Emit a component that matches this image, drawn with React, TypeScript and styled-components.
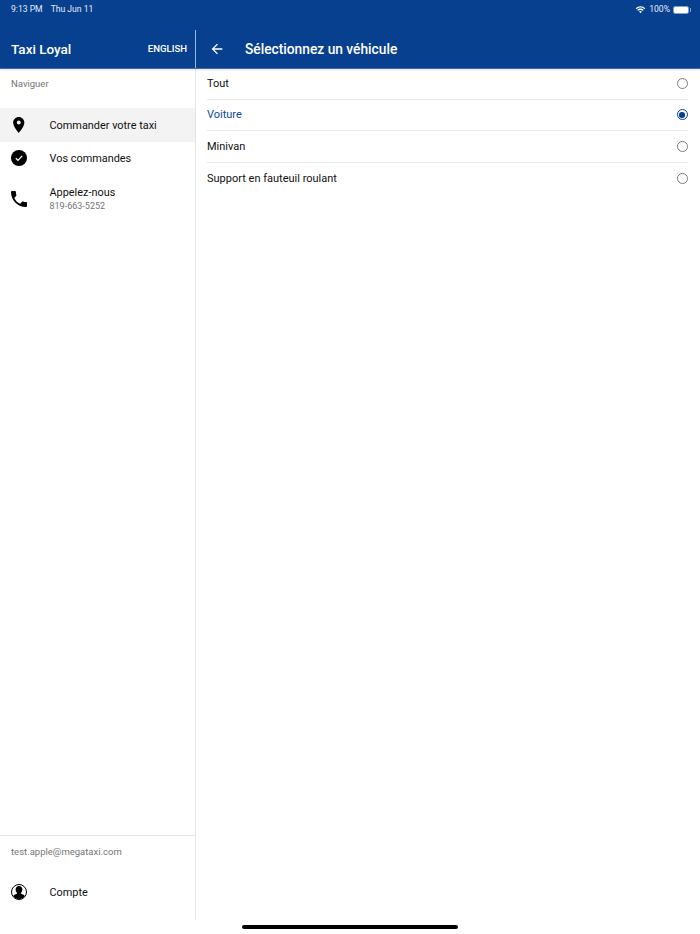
import React from 'react';
import styled, { createGlobalStyle } from 'styled-components';

const GlobalStyle = createGlobalStyle`
  html, body {
    margin: 0;
    padding: 0;
    background: #fff;
    font-family: Roboto, "Liberation Sans", sans-serif;
  }
`;

const vehicules = [
  { id: 'tout', nom: 'Tout', actif: false },
  { id: 'voiture', nom: 'Voiture', actif: true },
  { id: 'minivan', nom: 'Minivan', actif: false },
  { id: 'fauteuil', nom: 'Support en fauteuil roulant', actif: false },
];

const App: React.FC = () => (
  <Page>
    <GlobalStyle />
    <Header>
      <StatusBar>
        <StatusGroup>
          <span>9:13 PM</span>
          <span>Thu Jun 11</span>
        </StatusGroup>
        <StatusRight>
          <svg width="11" height="8" viewBox="0 0 24 18" fill="#fff">
            <path d="M12 3.600c3.400 0 6.500 1.300 8.800 3.500l1.900-2C19.900 2.300 16.100.6 12 .6S4.100 2.300 1.300 5.100l1.900 2C5.500 4.900 8.600 3.600 12 3.600z" />
            <path d="M12 8.800c2 0 3.800.8 5.200 2l1.900-2C17.200 7 14.700 5.900 12 5.900S6.800 7 4.900 8.800l1.900 2c1.400-1.200 3.200-2 5.200-2z" />
            <path d="M12 11.200c-1.300 0-2.500.5-3.400 1.300L12 16.400l3.400-3.900c-.9-.8-2.100-1.300-3.400-1.300z" />
          </svg>
          <span>100%</span>
          <Battery>
            <BatteryFill />
          </Battery>
        </StatusRight>
      </StatusBar>
      <TitleRow>
        <SideTitle>
          <Brand>Taxi Loyal</Brand>
          <Lang>ENGLISH</Lang>
        </SideTitle>
        <MainTitle>
          <svg width="16" height="16" viewBox="0 0 24 24" fill="#fff">
            <path d="M20 11H7.830l5.590-5.590L12 4l-8 8 8 8 1.410-1.410L7.830 13H20v-2z" />
          </svg>
          <PageTitle>Sélectionnez un véhicule</PageTitle>
        </MainTitle>
      </TitleRow>
    </Header>
    <Body>
      <Sidebar>
        <SectionLabel>Naviguer</SectionLabel>
        <NavItem $active>
          <NavIcon>
            <svg width="11.500" height="16" viewBox="5 2 14 20" fill="#000">
              <path d="M12 2C8.130 2 5 5.130 5 9c0 5.250 7 13 7 13s7-7.750 7-13c0-3.870-3.130-7-7-7zm0 9.500a2.500 2.500 0 1 1 0-5 2.500 2.500 0 0 1 0 5z" />
            </svg>
          </NavIcon>
          <NavText>Commander votre taxi</NavText>
        </NavItem>
        <NavItem>
          <NavIcon>
            <svg width="16" height="16" viewBox="0 0 16 16">
              <circle cx="8" cy="8" r="8" fill="#000" />
              <path d="M4.800 8.300l2.200 2.100 4.200-4.500" fill="none" stroke="#fff" strokeWidth="1.300" />
            </svg>
          </NavIcon>
          <NavText>Vos commandes</NavText>
        </NavItem>
        <NavItem $tall>
          <NavIcon>
            <svg width="16" height="16" viewBox="3 3 18 18" fill="#000">
              <path d="M6.620 10.790c1.440 2.830 3.760 5.140 6.590 6.590l2.200-2.200c.27-.27.67-.36 1.020-.24 1.120.37 2.330.57 3.570.57.550 0 1 .45 1 1V20c0 .55-.45 1-1 1-9.390 0-17-7.610-17-17 0-.55.450-1 1-1h3.500c.55 0 1 .45 1 1 0 1.250.2 2.450.57 3.570.110.350.03.740-.25 1.020l-2.200 2.200z" />
            </svg>
          </NavIcon>
          <NavLines>
            <NavText>Appelez-nous</NavText>
            <Phone>819-663-5252</Phone>
          </NavLines>
        </NavItem>
        <SidebarFooter>
          <SectionLabel>test.apple@megataxi.com</SectionLabel>
          <AccountItem>
            <NavIcon>
              <svg width="16" height="16" viewBox="0 0 16 16">
                <circle cx="8" cy="8" r="7.500" fill="#fff" stroke="#000" />
                <path d="M8 2c-2.100 0-3.400 1.600-3.400 3.600 0 1.300.5 2.400 1.300 3.200v.9c-1.500.5-2.900 1.100-3.700 2C3.300 13.800 5.500 15.300 8 15.300s4.700-1.500 5.800-3.600c-.8-.9-2.200-1.500-3.700-2v-.9c.8-.8 1.300-1.900 1.300-3.200C11.400 3.600 10.100 2 8 2z" fill="#000" />
              </svg>
            </NavIcon>
            <NavText>Compte</NavText>
          </AccountItem>
        </SidebarFooter>
      </Sidebar>
      <Main>
        {vehicules.map((v) => (
          <Option key={v.id}>
            <OptionLabel $active={v.actif}>{v.nom}</OptionLabel>
            <Radio $active={v.actif}>{v.actif && <RadioDot />}</Radio>
          </Option>
        ))}
      </Main>
    </Body>
    <HomeZone>
      <HomeBar />
    </HomeZone>
  </Page>
);

export default App;

const Page = styled.div`
  width: 700px;
  height: 934px;
  display: flex;
  flex-direction: column;
  overflow: hidden;
  background: #fff;
`;

const Header = styled.header`
  flex: none;
  height: 69px;
  box-sizing: border-box;
  background: #07408e;
  border-bottom: 1px solid #3f6ba8;
  box-shadow: 0 1px 2px rgba(0, 0, 0, 0.12);
  display: flex;
  flex-direction: column;
  color: #fff;
  position: relative;
  z-index: 1;
`;

const StatusBar = styled.div`
  height: 30px;
  box-sizing: border-box;
  padding: 3px 11px 0 11px;
  display: flex;
  justify-content: space-between;
  align-items: flex-start;
  font-size: 8.600px;
  line-height: 13px;
  color: #e6ecf5;
`;

const StatusGroup = styled.div`
  display: flex;
  gap: 8px;
`;

const StatusRight = styled.div`
  display: flex;
  align-items: center;
  gap: 3px;
  height: 13px;
`;

const Battery = styled.div`
  position: relative;
  width: 16px;
  height: 8px;
  box-sizing: border-box;
  border: 1px solid #7f9ec9;
  border-radius: 2px;
  display: flex;
  &::after {
    content: '';
    position: absolute;
    right: -3px;
    top: 1px;
    width: 1px;
    height: 4px;
    background: #7f9ec9;
  }
`;

const BatteryFill = styled.div`
  flex: 1;
  background: #fff;
  border-radius: 1px;
`;

const TitleRow = styled.div`
  flex: 1;
  display: flex;
`;

const SideTitle = styled.div`
  width: 195px;
  box-sizing: border-box;
  padding: 0 8px 0 11px;
  display: flex;
  align-items: center;
  justify-content: space-between;
`;

const Brand = styled.div`
  font-size: 13.500px;
  font-weight: 500;
`;

const Lang = styled.div`
  font-size: 9.600px;
  font-weight: 500;
  margin-top: -1px;
`;

const MainTitle = styled.div`
  flex: 1;
  border-left: 1px solid #9db5d6;
  padding-left: 13px;
  display: flex;
  align-items: center;
  gap: 20px;
`;

const PageTitle = styled.div`
  font-size: 13.750px;
  font-weight: 500;
`;

const Body = styled.div`
  flex: 1;
  display: flex;
  min-height: 0;
  margin-top: -1px;
`;

const Sidebar = styled.aside`
  width: 196px;
  box-sizing: border-box;
  border-right: 1px solid #e4e4e4;
  display: flex;
  flex-direction: column;
`;

const SectionLabel = styled.div`
  height: 40px;
  box-sizing: border-box;
  padding: 9px 11px 0;
  font-size: 9.500px;
  line-height: 13px;
  color: #757575;
`;

const NavItem = styled.div<{ $active?: boolean; $tall?: boolean }>`
  height: ${(p) => (p.$tall ? '47px' : '33.500px')};
  display: flex;
  align-items: center;
  background: ${(p) => (p.$active ? '#f3f3f3' : 'transparent')};
`;

const NavIcon = styled.div`
  width: 16px;
  flex: none;
  margin: 0 22.500px 0 11px;
  display: flex;
  justify-content: center;
  svg {
    display: block;
  }
`;

const NavLines = styled.div`
  display: flex;
  flex-direction: column;
`;

const NavText = styled.div`
  font-size: 10.900px;
  line-height: 14px;
  padding-top: 2px;
  color: #111;
`;

const Phone = styled.div`
  font-size: 9px;
  line-height: 13px;
  color: #757575;
`;

const SidebarFooter = styled.div`
  margin-top: auto;
  border-top: 1px solid #e4e4e4;
  height: 85px;
  box-sizing: border-box;
`;

const AccountItem = styled.div`
  height: 31px;
  display: flex;
  align-items: center;
`;

const Main = styled.main`
  flex: 1;
  padding: 0 12.500px 0 11px;
`;

const Option = styled.div`
  height: 31.500px;
  box-sizing: border-box;
  display: flex;
  align-items: center;
  justify-content: space-between;
  border-bottom: 1px solid #e8e8e8;
  &:last-child {
    border-bottom: none;
  }
`;

const OptionLabel = styled.div<{ $active: boolean }>`
  font-size: 11px;
  color: ${(p) => (p.$active ? '#0b4aa0' : '#111')};
`;

const Radio = styled.div<{ $active: boolean }>`
  width: 11px;
  height: 11px;
  box-sizing: border-box;
  border: 1.500px solid ${(p) => (p.$active ? '#07408e' : '#7a7a7a')};
  border-radius: 50%;
  display: flex;
  align-items: center;
  justify-content: center;
`;

const RadioDot = styled.div`
  width: 5.500px;
  height: 5.500px;
  background: #07408e;
  border-radius: 50%;
`;

const HomeZone = styled.div`
  flex: none;
  height: 14px;
  display: flex;
  justify-content: center;
  align-items: flex-start;
  padding-top: 5px;
  box-sizing: border-box;
`;

const HomeBar = styled.div`
  width: 216px;
  height: 4px;
  background: #000;
  border-radius: 2px;
`;
